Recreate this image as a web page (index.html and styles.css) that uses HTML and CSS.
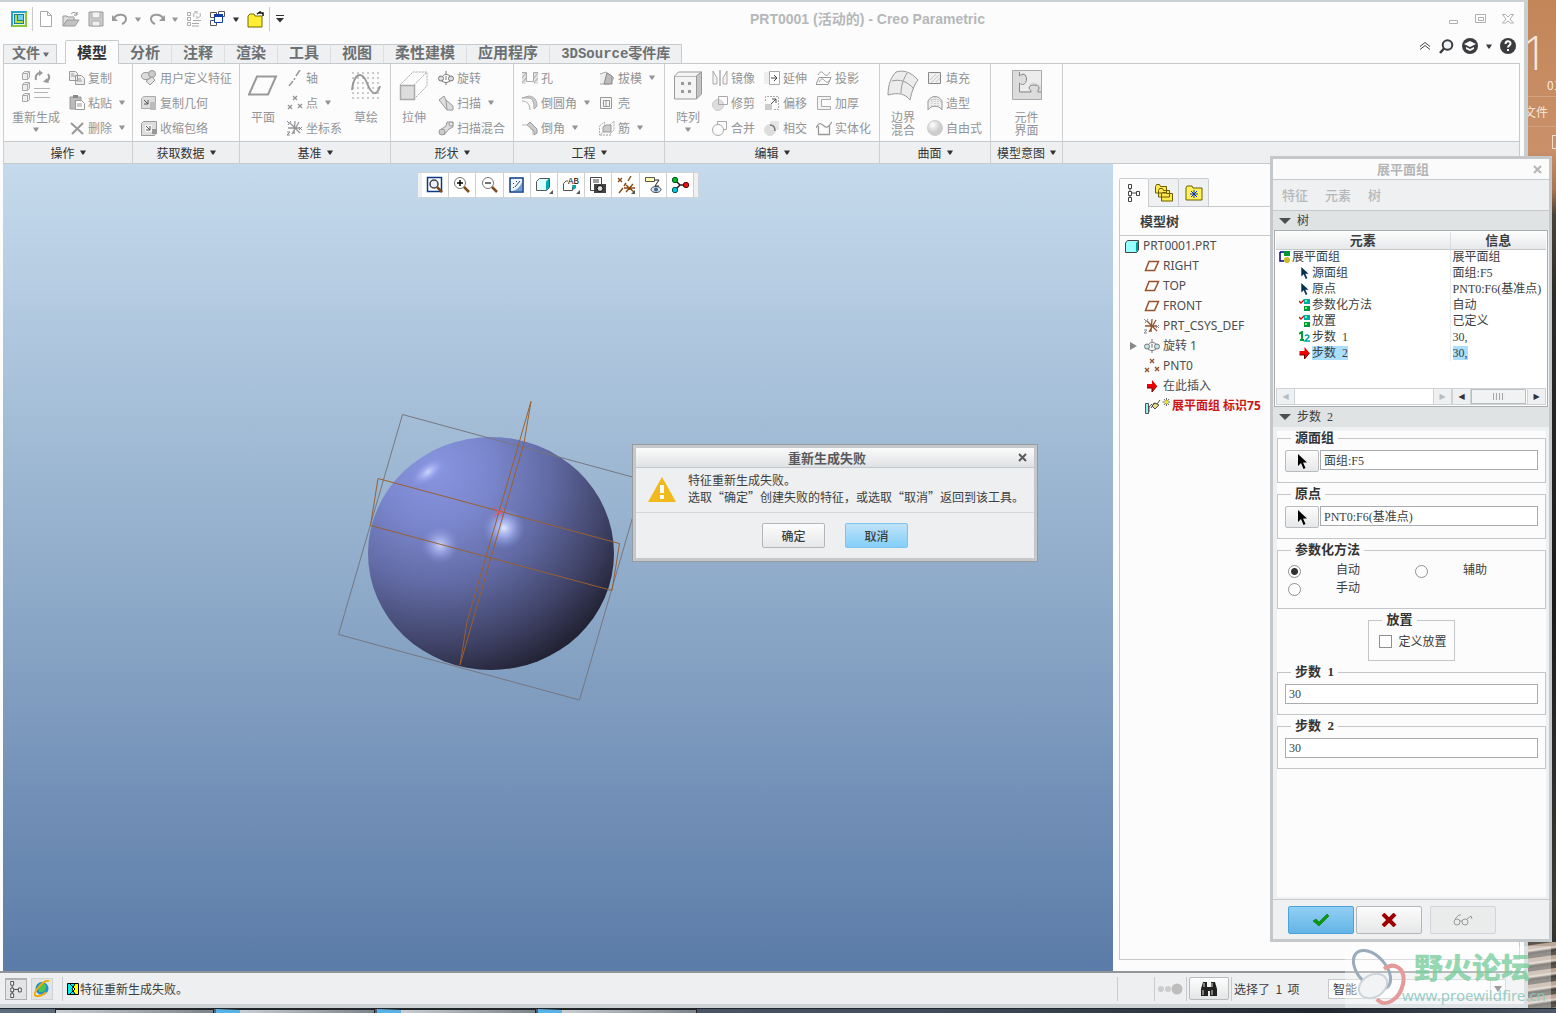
FILE: index.html
```html
<!DOCTYPE html>
<html lang="zh-CN">
  <head>
    <meta charset="UTF-8" />
    <meta name="viewport" content="width=device-width, initial-scale=1.0" />
    <title>PRT0001 (活动的) - Creo Parametric</title>
    <link rel="stylesheet" href="styles.css">
  </head>
  <body>
    <!-- shared icons -->
    <svg class="sprite" aria-hidden="true">
      <symbol id="i-down" viewBox="0 0 6 5"><path d="M0 0.500h6L3.600 4.500h-1.200z" fill="currentColor" /></symbol>
      <symbol id="i-plane" viewBox="0 0 16 12"><path d="M5 1.500h9.500l-4 9h-9z" fill="none" stroke="currentColor" stroke-width="1.500" /></symbol>
      <symbol id="i-points" viewBox="0 0 16 16"><path d="M6 1l4 4m0-4l-4 4M1 10l4 4m0-4l-4 4M11 9l4 4m0-4l-4 4" stroke="currentColor" stroke-width="1.300" fill="none" /></symbol>
      <symbol id="i-csys" viewBox="0 0 16 16"><path d="M3 3l10 10M12 2L5 14M1 8h12M8 1l-1 13" stroke="currentColor" stroke-width="1.300" fill="none" /><path d="M0 1l2 2m2-2L1 5M12 7l3 3m0-3l-3 3M0 12h3l-3 3h3" stroke="#888" fill="none" /></symbol>
      <symbol id="i-revolve" viewBox="0 0 16 14"><path d="M8 0v3m0 2v4m0 2v3M5 5c1-2 5-2 7 0M4 10c3 2 5 2 8 0" stroke="#777" fill="none" /><circle cx="3" cy="7.500" r="2.500" fill="#bfe6e8" stroke="#777" /><circle cx="13" cy="7.500" r="2.500" fill="#bfe6e8" stroke="#777" /></symbol>
      <symbol id="i-cursor" viewBox="0 0 10 15"><path d="M1 0v12l3-3 2.500 6 2-1L6 8.500h4z" fill="currentColor" /></symbol>
      <symbol id="i-tree" viewBox="0 0 14 18"><path d="M3 5v8M5 9h4" stroke="#444" /><path d="M1.500.500h3v4h-3zM1.500 7.500h3v4h-3zM9.500 7.500h3v4h-3zM1.500 13.500h3v4h-3z" fill="#fff" stroke="#444" /></symbol>
      <symbol id="i-arrow" viewBox="0 0 10 12"><path d="M0 4h5V0l5 6-5 6V8H0z" fill="#e00" /><path d="M0 8h5v4l5-6" fill="none" stroke="#700" /></symbol>
      <symbol id="i-def" viewBox="0 0 11 12"><path d="M0 2l2 2 4-4" stroke="#d00" stroke-width="1.300" fill="none" /><path d="M5 0h6v5H5z" fill="#0aa" /><path d="M5 7h6v5H5z" fill="#093" /><path d="M6 1h2v2H6zM6 8h2v2H6z" fill="#6f9" /></symbol>
      <symbol id="i-close" viewBox="0 0 9 9"><path d="M1 1l7 7M8 1L1 8" stroke="currentColor" stroke-width="2" /></symbol>
    </svg>

    <div class="desktop">
      <div class="app">
        <header class="titlebar">
          <div class="quick">
            <svg class="logo" width="16" height="16" viewBox="0 0 16 16"><path d="M0 0h16v16H0z" fill="#8cc63f" /><path d="M0 0h16L0 16z" fill="#2ba5cf" /><path d="M2 2h12v12H2z" fill="#e8f6e6" /><path d="M3 3h10v10H3z" fill="#1b7d9c" /><path d="M7 4h5v5H7z" fill="#6fd0ee" /><path d="M4 4h2v6h6v2H4z" fill="#b9dc3a" /></svg>
            <i class="rule"></i>
            <button class="q" aria-label="新建"><svg width="16" height="16" viewBox="0 0 16 16"><path d="M2.500.500h7l4 4v11h-11zM9.500.500v4h4" fill="#fff" stroke="#aaa" /></svg></button>
            <button class="q" aria-label="打开"><svg width="18" height="16" viewBox="0 0 18 16"><path d="M1 15V5h4l1 1h6v3" fill="#ddd" stroke="#999" /><path d="M1 15l4-6h12l-4 6z" fill="#c2c2c2" stroke="#999" /><path d="M9 3c2-2 4-2 6 0m0-2v3h-3" fill="none" stroke="#888" /></svg></button>
            <button class="q" aria-label="保存"><svg width="16" height="16" viewBox="0 0 16 16"><path d="M1 1h14v14H1z" fill="#ccc" stroke="#999" /><path d="M4 1h8v6H4zM4 10h8v5H4z" fill="#f1f1f1" stroke="#aaa" /></svg></button>
            <button class="q" aria-label="撤消"><svg width="16" height="12" viewBox="0 0 16 12"><path d="M2 5c3-5 12-4 12 1 0 3-2 4-4 5" fill="none" stroke="#999" stroke-width="2" /><path d="M0 2v6h6z" fill="#999" /></svg><svg class="dd" width="6" height="5"><use href="#i-down" /></svg></button>
            <button class="q" aria-label="重做"><svg width="16" height="12" viewBox="0 0 16 12"><path d="M14 5C11 0 2 1 2 6c0 3 2 4 4 5" fill="none" stroke="#999" stroke-width="2" /><path d="M16 2v6h-6z" fill="#999" /></svg><svg class="dd" width="6" height="5"><use href="#i-down" /></svg></button>
            <button class="q" aria-label="重新生成"><svg width="16" height="16" viewBox="0 0 16 16"><path d="M1.500 1.500h3v3h-3zM1.500 6.500h3v3h-3zM1.500 11.500h3v3h-3zM7 9.500h8M6 12.500h7M6 15h7M8 6c-1-3 0-4 2-5M8 0h3v3M14 2c1 3 0 4-2 5M11 8V5" fill="none" stroke="#aaa" /></svg></button>
            <button class="q on" aria-label="窗口"><svg width="16" height="16" viewBox="0 0 16 16"><path d="M.500 1.500h6v5h-6zM8.500.500h6v5h-6zM.500 9.500h6v5h-6z" fill="#fff" stroke="#555" /><path d="M4.500 3.500h8v8h-8z" fill="#fff" stroke="#0a3ea8" /><path d="M4 3h9v3H4z" fill="#0a3ea8" /></svg><svg class="dd" width="6" height="5"><use href="#i-down" /></svg></button>
            <button class="q" aria-label="关闭"><svg width="17" height="17" viewBox="0 0 17 17"><path d="M1 16V5l2-2h4l1 2h7v11z" fill="#ffee33" stroke="#7a6a00" /><path d="M10 3l3-2v1h3v3" fill="none" stroke="#111" stroke-width="1.500" /></svg></button>
            <i class="rule"></i>
            <button class="q on" aria-label="自定义"><svg width="10" height="8" viewBox="0 0 10 8"><path d="M1 .500h8" stroke="#333" /><path d="M1 3h8L5 7.500z" fill="#333" /></svg></button>
          </div>
          <h1 class="title">PRT0001 (活动的) - Creo Parametric</h1>
          <div class="winbtns">
            <button aria-label="最小化"><svg width="12" height="10" viewBox="0 0 12 10"><path d="M1.500 6.500h8v3h-8z" fill="none" stroke="#b0b0b0" /></svg></button>
            <button aria-label="最大化"><svg width="12" height="10" viewBox="0 0 12 10"><path d="M.500.500h10v8h-10zM3.500 3.500h5v3h-5z" fill="none" stroke="#b0b0b0" /></svg></button>
            <button aria-label="关闭窗口"><svg width="12" height="10" viewBox="0 0 12 10"><path d="M.500.500h3L6 3 8.500.500h3L8 5l3.500 4h-3L6 7 3.500 9h-3L4 5z" fill="none" stroke="#b0b0b0" /></svg></button>
          </div>
        </header>

        <nav class="tabs">
          <button class="tab file">文件<svg width="6" height="5"><use href="#i-down" /></svg></button>
          <button class="tab active">模型</button>
          <button class="tab">分析</button>
          <button class="tab">注释</button>
          <button class="tab">渲染</button>
          <button class="tab">工具</button>
          <button class="tab">视图</button>
          <button class="tab">柔性建模</button>
          <button class="tab">应用程序</button>
          <button class="tab last">3DSource零件库</button>
          <div class="helpers">
            <button aria-label="折叠"><svg width="12" height="8" viewBox="0 0 12 8"><path d="M1 4.500L6 .500l5 4M1 7.500l5-4 5 4" fill="none" stroke="#444" /></svg></button>
            <button aria-label="搜索"><svg width="15" height="15" viewBox="0 0 15 15"><circle cx="8.500" cy="6" r="4.800" fill="#eef4f8" stroke="#3c3c40" stroke-width="2" /><path d="M5 9.500L1 14" stroke="#3c3c40" stroke-width="2.500" /></svg></button>
            <button aria-label="学习"><svg width="16" height="16" viewBox="0 0 16 16"><circle cx="8" cy="8" r="8" fill="#3c3c40" /><path d="M2 6l6-3 6 3-6 3zM4 9v2l4 2 4-2V9l-4 2z" fill="#fff" /></svg></button>
            <button aria-label="更多"><svg width="6" height="5"><use href="#i-down" /></svg></button>
            <button aria-label="帮助"><svg width="16" height="16" viewBox="0 0 16 16"><circle cx="8" cy="8" r="8" fill="#3c3c40" /><path d="M5.500 6c0-3.500 5-3.500 5-.500C10.500 7.500 8 7.500 8 9.500M8 11v2" fill="none" stroke="#fff" stroke-width="2" /></svg></button>
          </div>
        </nav>

        <section class="ribbon">
          <div class="group">
            <div class="tools">
              <button class="big wide"><svg width="30" height="32" viewBox="0 0 30 32"><path d="M1.500 3.500l2-2h5v6l-2 2h-5zM1.500 14.500l2-2h5v6l-2 2h-5zM1.500 25.500l2-2h5v6l-2 2h-5z" fill="#eee" stroke="#aaa" /><path d="M1.500 3.500h5v6M6.500 3.500l2-2M1.500 14.500h5v6M6.500 14.500l2-2M1.500 25.500h5v6M6.500 25.500l2-2" fill="none" stroke="#aaa" /><path d="M13 18.500h16M13 22.500h14M13 27.500h16" stroke="#b4b4b4" /><path d="M15 10c-1-4 1-7 4-7M27 4c2 3 1 6-2 8" stroke="#999" stroke-width="2" fill="none" /><path d="M18 0l4 3-4 3zM28 13l-6-1 4-4z" fill="#999" /></svg><span>重新生成</span><svg class="dd" width="6" height="5"><use href="#i-down" /></svg></button>
              <div class="col">
                <button><svg width="16" height="16" viewBox="0 0 16 16"><path d="M.500 1.500h6l2 2v7h-8zM6.500 5.500h6l3 3v6h-9zM2 4h3M2 6h4M8 9h4M8 11h5" fill="#eee" stroke="#999" /></svg>复制</button>
                <button><svg width="16" height="16" viewBox="0 0 16 16"><path d="M1 2h11v12H1z" fill="#bbb" stroke="#999" /><path d="M4 0h5v3H4z" fill="#888" /><path d="M6.500 5.500h6l3 3v6h-9zM8 9h5M8 11h5" fill="#fff" stroke="#999" /></svg>粘贴<svg class="dd" width="6" height="5"><use href="#i-down" /></svg></button>
                <button><svg width="16" height="16" viewBox="0 0 16 16"><path d="M2 3l12 11M14 3L3 14" stroke="#999" stroke-width="2" /></svg>删除<svg class="dd" width="6" height="5"><use href="#i-down" /></svg></button>
              </div>
            </div>
            <button class="name">操作 <svg width="6" height="5"><use href="#i-down" /></svg></button>
          </div>

          <div class="group">
            <div class="tools">
              <div class="col">
                <button><svg width="16" height="16" viewBox="0 0 16 16"><ellipse cx="5" cy="6" rx="4.500" ry="3.500" fill="#ddd" stroke="#999" /><circle cx="11" cy="4" r="3.500" fill="#ccc" stroke="#999" /><path d="M5 11l6-4 3 3-5 5z" fill="#e4e4e4" stroke="#999" /></svg>用户定义特征</button>
                <button><svg width="16" height="16" viewBox="0 0 16 16"><path d="M.500 3.500l2-2h12v9l-4 3H.500z" fill="#ddd" stroke="#aaa" /><path d="M3 5l4 4M7 5v4H3" stroke="#555" fill="none" /><path d="M9 7h6v8H9z" fill="#bbb" /></svg>复制几何</button>
                <button><svg width="16" height="16" viewBox="0 0 16 16"><path d="M.500 3.500l2-2h13v11l-2 3H.500z" fill="#ddd" stroke="#999" /><path d="M4 5h7v7H4z" fill="#f6f6f6" /><path d="M5 6l4 4M9 6v4H5" stroke="#555" fill="none" /><path d="M11 9h5v5h-5z" fill="#999" /></svg>收缩包络</button>
              </div>
            </div>
            <button class="name">获取数据 <svg width="6" height="5"><use href="#i-down" /></svg></button>
          </div>

          <div class="group">
            <div class="tools">
              <button class="big"><svg width="30" height="32" viewBox="0 0 30 32"><path d="M9 6.500h19l-8 18H1z" fill="none" stroke="#999" stroke-width="2" /></svg><span>平面</span></button>
              <div class="col">
                <button><svg width="16" height="16" viewBox="0 0 16 16"><path d="M13 0L9 6M8 8l-1 2M6 11l-4 5" stroke="#999" stroke-width="1.500" /></svg>轴</button>
                <button><svg width="16" height="16"><use href="#i-points" /></svg>点<svg class="dd" width="6" height="5"><use href="#i-down" /></svg></button>
                <button><svg width="16" height="16"><use href="#i-csys" /></svg>坐标系</button>
              </div>
              <button class="big"><svg width="30" height="32" viewBox="0 0 30 32"><path d="M1 3h28M1 8h28M1 13h28M1 18h28M1 23h28M1 28h28" stroke="#bbb" stroke-dasharray="2 3" stroke-width="1.500" /><path d="M1 20C3 3 11 0 16 13s10 13 13 3" fill="none" stroke="#999" stroke-width="2" /></svg><span>草绘</span></button>
            </div>
            <button class="name">基准 <svg width="6" height="5"><use href="#i-down" /></svg></button>
          </div>

          <div class="group">
            <div class="tools">
              <button class="big"><svg width="30" height="32" viewBox="0 0 30 32"><path d="M1.500 15.500h14v14h-14z" fill="#ddd" stroke="#aaa" stroke-width="1.500" /><path d="M1 15L14 2h14v14L15 29M15 15L28 2" fill="none" stroke="#aaa" stroke-dasharray="2 1" /></svg><span>拉伸</span></button>
              <div class="col">
                <button><svg class="grey" width="16" height="16"><use href="#i-revolve" /></svg>旋转</button>
                <button><svg width="16" height="16" viewBox="0 0 16 16"><path d="M1 5l5-4 2 4 7 6v4H9L5 10z" fill="#ddd" stroke="#999" /><path d="M8 5l1 10" stroke="#999" /></svg>扫描<svg class="dd" width="6" height="5"><use href="#i-down" /></svg></button>
                <button><svg width="16" height="16" viewBox="0 0 16 16"><path d="M2 10l6-4 1-4h6v5l-4 2-5 6z" fill="#ddd" stroke="#999" /><circle cx="4" cy="12" r="3" fill="#ccc" stroke="#999" /><circle cx="13" cy="4" r="2" fill="#eee" stroke="#999" /></svg>扫描混合</button>
              </div>
            </div>
            <button class="name">形状 <svg width="6" height="5"><use href="#i-down" /></svg></button>
          </div>

          <div class="group">
            <div class="tools">
              <div class="col">
                <button><svg width="16" height="16" viewBox="0 0 16 16"><path d="M0 2h4v12H0zM12 2h4v12h-4z" fill="#e0e0e0" /><path d="M0 2.500h4.500v9h7v-9H16M0 8l4-5M0 13l4-5M12 13l4-5M12 8l4-5" fill="none" stroke="#aaa" /></svg>孔</button>
                <button><svg width="16" height="16" viewBox="0 0 16 16"><path d="M0 3h6c5 0 6 4 6 11l3-3c0-7-3-9-8-10z" fill="#ccc" stroke="#aaa" /><path d="M0 6c5 0 8 3 8 9" stroke="#aaa" fill="none" /></svg>倒圆角<svg class="dd" width="6" height="5"><use href="#i-down" /></svg></button>
                <button><svg width="16" height="16" viewBox="0 0 16 16"><path d="M5 5l3-3 7 7v4l-3 2v-4z" fill="#ccc" stroke="#999" /><path d="M0 5h5l6 6v4" stroke="#bbb" fill="none" /></svg>倒角<svg class="dd" width="6" height="5"><use href="#i-down" /></svg></button>
              </div>
              <div class="col">
                <button><svg width="16" height="16" viewBox="0 0 16 16"><path d="M1 4l6-2 8 6-5 6H1" fill="#eee" stroke="#aaa" /><path d="M5 14L8 3l5 3v8z" fill="#bbb" stroke="#888" /></svg>拔模<svg class="dd" width="6" height="5"><use href="#i-down" /></svg></button>
                <button><svg width="16" height="16" viewBox="0 0 16 16"><path d="M1.500 2.500h11v11h-11zM4.500 5.500h6v6h-6z" fill="#f4f4f4" stroke="#999" /><path d="M7 6v5" stroke="#999" /></svg>壳</button>
                <button><svg width="16" height="16" viewBox="0 0 16 16"><path d="M.500 6l5-4v9l-5 4zM11 5l4-4v9l-4 4" fill="none" stroke="#aaa" stroke-dasharray="2 1" /><path d="M4 12V7l3-2h5v7z" fill="#ccc" stroke="#999" /><path d="M1 15h11" stroke="#999" stroke-dasharray="2 1" /></svg>筋<svg class="dd" width="6" height="5"><use href="#i-down" /></svg></button>
              </div>
            </div>
            <button class="name">工程 <svg width="6" height="5"><use href="#i-down" /></svg></button>
          </div>

          <div class="group">
            <div class="tools">
              <button class="big"><svg width="30" height="32" viewBox="0 0 30 32"><path d="M1.500 6l4-4h23l-5 4v23h-22z" fill="#f4f4f4" stroke="#999" /><path d="M1.500 6.500h22" stroke="#bbb" /><path d="M23.500 6l5-4v22l-5 5z" fill="#c4c4c4" stroke="#999" /><path d="M8 12h3v3H8zM15 12h3v3h-3zM8 20h3v3H8zM15 20h3v3h-3z" fill="#999" /></svg><span>阵列</span><svg class="dd" width="6" height="5"><use href="#i-down" /></svg></button>
              <div class="col">
                <button><svg width="16" height="16" viewBox="0 0 16 16"><path d="M1 1v13h4V8zM15 1v13h-4V8z" fill="#f4f4f4" stroke="#aaa" /><path d="M8 0v16" stroke="#888" /></svg>镜像</button>
                <button><svg width="16" height="16" viewBox="0 0 16 16"><circle cx="6" cy="10" r="5.500" fill="#ddd" stroke="#ccc" /><path d="M6.500 9.500v-8h9v8z" fill="none" stroke="#aaa" /></svg>修剪</button>
                <button><svg width="16" height="16" viewBox="0 0 16 16"><circle cx="6" cy="10" r="5.500" fill="none" stroke="#aaa" /><path d="M5.500 5V1.500h9v8H11" fill="none" stroke="#aaa" /></svg>合并</button>
              </div>
              <div class="col">
                <button><svg width="16" height="16" viewBox="0 0 16 16"><path d="M0 2h5v12H0z" fill="#eee" /><path d="M5.500 1.500h10v13h-10z" fill="#fff" stroke="#aaa" /><path d="M7 8h6m-3-3l3 3-3 3" stroke="#444" fill="none" /></svg>延伸</button>
                <button><svg width="16" height="16" viewBox="0 0 16 16"><path d="M1 9h7v6H1z" fill="#ccc" /><path d="M1.500 6V1.500h13v13H10" fill="none" stroke="#aaa" stroke-dasharray="2 1" /><path d="M7 9l5-5m-4 0h4v4" stroke="#555" fill="none" /></svg>偏移</button>
                <button><svg width="16" height="16" viewBox="0 0 16 16"><circle cx="6" cy="10" r="5.500" fill="#ddd" stroke="#ddd" /><path d="M6 1h9v9H6z" fill="#e6e6e6" /><path d="M6 5c4 0 5 2 5 6" stroke="#777" stroke-width="1.500" fill="none" /></svg>相交</button>
              </div>
              <div class="col">
                <button><svg width="16" height="16" viewBox="0 0 16 16"><path d="M2 5c3-5 4-3 6-1s4 2 6-2M3 12c3-5 4-3 6-1s3 1 5-1M3 7.500h12l-3 7H0z" fill="none" stroke="#999" /></svg>投影</button>
                <button><svg width="16" height="16" viewBox="0 0 16 16"><path d="M14.500 4.500h-9v7h9v3h-13v-13h13z" fill="#f4f4f4" stroke="#aaa" /></svg>加厚</button>
                <button><svg width="16" height="16" viewBox="0 0 16 16"><path d="M0 8c3-6 5-5 8-2s5 0 8-4M2.500 6v8.500h11V5" fill="none" stroke="#999" stroke-width="1.300" /></svg>实体化</button>
              </div>
            </div>
            <button class="name">编辑 <svg width="6" height="5"><use href="#i-down" /></svg></button>
          </div>

          <div class="group">
            <div class="tools">
              <button class="big"><svg width="32" height="32" viewBox="0 0 32 32"><path d="M9 2c7-2 14-1 22 8-4 5-6 11-8 20C18 24 12 22 1 25 1 15 4 7 9 2z" fill="#ececec" stroke="#999" /><path d="M5 11c8-2 15 0 22 8M20 3c-4 7-6 13-6 20" fill="none" stroke="#999" /></svg><span>边界<br />混合</span></button>
              <div class="col">
                <button><svg width="16" height="16" viewBox="0 0 16 16"><path d="M1.500 2.500h12v11h-12z" fill="#eee" stroke="#888" /><path d="M3 10l6-6M4 13l8-8M9 12l4-4" stroke="#ccc" /></svg>填充</button>
                <button><svg width="16" height="16" viewBox="0 0 16 16"><path d="M1 15V6c3-6 11-6 14 0v9c-3-5-11-5-14 0z" fill="#eee" stroke="#999" /><path d="M5 11V3M8 11V2M11 11V3M1 8c4-5 10-5 14 0" stroke="#bbb" stroke-dasharray="1 1" fill="none" /></svg>造型</button>
                <button><svg width="16" height="16" viewBox="0 0 16 16"><defs><radialGradient id="ball" cx=".35" cy=".3"><stop offset="0" stop-color="#fff" /><stop offset="1" stop-color="#ccc" /></radialGradient></defs><circle cx="8" cy="8" r="7.500" fill="url(#ball)" stroke="#ccc" /></svg>自由式</button>
              </div>
            </div>
            <button class="name">曲面 <svg width="6" height="5"><use href="#i-down" /></svg></button>
          </div>

          <div class="group">
            <div class="tools center">
              <button class="big"><svg width="30" height="32" viewBox="0 0 30 32"><path d="M.500.500h29v29H.500z" fill="#dcdcdc" stroke="#aaa" /><path d="M1 1h28v14l-3-1c-4-3-10-1-9 3l2 4H8v-9c7 4 10-8 3-9L8 5V1z" fill="#ececec" /><path d="M7.500 2v4c3-3 7-2 7 3s-4 7-7 4v9H19c1-1-2-3-2-4 0-4 10-4 10 0 0 1-2 3-1 4h3" fill="none" stroke="#888" /></svg><span>元件<br />界面</span></button>
            </div>
            <button class="name">模型意图 <svg width="6" height="5"><use href="#i-down" /></svg></button>
          </div>
          <div class="group rest"><div class="tools"></div><div class="name"></div></div>
        </section>

        <main class="work">
          <div class="canvas">
            <div class="viewbar">
              <button aria-label="重新调整"><svg width="18" height="18" viewBox="0 0 18 18"><path d="M1.500 1.500h14v14h-14z" fill="#fff" stroke="#0a3a86" stroke-width="1.500" /><circle cx="8" cy="8" r="4" fill="#eef" stroke="#444" stroke-width="1.500" /><path d="M11 11l5 5" stroke="#7b4a1e" stroke-width="2.500" /></svg></button>
              <button aria-label="放大"><svg width="18" height="18" viewBox="0 0 18 18"><circle cx="7" cy="7" r="5.500" fill="#fff" stroke="#777" /><path d="M4 7h6M7 4v6" stroke="#000" stroke-width="1.500" /><path d="M11 11l5 5" stroke="#7b4a1e" stroke-width="2.500" /></svg></button>
              <button aria-label="缩小"><svg width="18" height="18" viewBox="0 0 18 18"><circle cx="7" cy="7" r="5.500" fill="#fff" stroke="#777" /><path d="M4 7h6" stroke="#444" stroke-width="1.500" /><path d="M11 11l5 5" stroke="#7b4a1e" stroke-width="2.500" /></svg></button>
              <button aria-label="重画"><svg width="18" height="18" viewBox="0 0 18 18"><path d="M2 2h13v14H2z" fill="#eef6fd" stroke="#0a3a86" stroke-width="1.500" /><path d="M14 6v9H4c5-1 8-4 10-9z" fill="#6f9ccf" /><path d="M12 5l-5 6M5 7l1 1M8 5l1 1M5 11l1 1" stroke="#345" /></svg></button>
              <button aria-label="显示样式"><svg width="18" height="18" viewBox="0 0 18 18"><path d="M1.500 5.500l3-3h10v9l-3 3h-10z" fill="#dff" stroke="#555" /><path d="M11 5.500l3-3v9l-3 3z" fill="#0aa" /><path d="M18 14v4h-4z" fill="#555" /></svg></button>
              <button aria-label="已命名视图"><svg width="18" height="18" viewBox="0 0 18 18"><path d="M6 5H4L1.500 7.500v7h9V11" fill="#fff" stroke="#555" /><path d="M10 9h4v3l-3 2z" fill="#0aa" /><text x="6" y="8" class="ab">AB</text><path d="M18 14v4h-4z" fill="#555" /></svg></button>
              <button aria-label="视图管理器"><svg width="18" height="18" viewBox="0 0 18 18"><path d="M1.500 1.500h11v13h-11zM4 4h6M4 6h6" fill="#fff" stroke="#444" /><path d="M5 8h12v9H5z" fill="#444" /><circle cx="11" cy="12.500" r="3" fill="#ddd" stroke="#000" /></svg></button>
              <button aria-label="基准显示"><svg width="18" height="18" viewBox="0 0 18 18"><path d="M1 2l4 4m0-4L1 6M14 0l-3 5M9 7l-2 3M6 12l-4 5M9 9l8 7m-1-8l-7 8M7 12h11" stroke="#8a4a18" stroke-width="1.400" fill="none" /><path d="M18 14v4h-4z" fill="#555" /></svg></button>
              <button aria-label="注释显示"><svg width="18" height="18" viewBox="0 0 18 18"><path d="M1.500 1.500h9v4h-9z" fill="#ffffb0" stroke="#555" /><path d="M11 4h4l-4 6h4" fill="none" stroke="#222" /><ellipse cx="12" cy="13.500" rx="5" ry="3" fill="#dbe6ee" stroke="#444" /><circle cx="12" cy="13.500" r="2" fill="#369" /></svg></button>
              <button aria-label="旋转中心"><svg width="18" height="18" viewBox="0 0 18 18"><path d="M4 4l5 5h5M9 9l-5 5" fill="none" stroke="#222" stroke-width="1.500" /><circle cx="4" cy="4" r="2.700" fill="#0b2" stroke="#052" /><circle cx="15" cy="9" r="2.700" fill="#e11" stroke="#500" /><circle cx="4" cy="14" r="2.700" fill="#0cd" stroke="#055" /></svg></button>
            </div>

            <svg class="model" width="320" height="320" viewBox="0 0 320 320" role="img" aria-label="球面模型">
              <defs>
                <radialGradient id="ballShade" gradientUnits="userSpaceOnUse" cx="105" cy="80" r="228">
                  <stop offset="0" stop-color="#8895e0" />
                  <stop offset=".25" stop-color="#7a86cc" />
                  <stop offset=".5" stop-color="#626ba5" />
                  <stop offset=".75" stop-color="#42466c" />
                  <stop offset="1" stop-color="#1b1a27" />
                </radialGradient>
                <radialGradient id="glint">
                  <stop offset="0" stop-color="#dfe8ff" />
                  <stop offset=".4" stop-color="#b4c0fb" stop-opacity=".7" />
                  <stop offset="1" stop-color="#8a96e0" stop-opacity="0" />
                </radialGradient>
              </defs>
              <ellipse cx="161" cy="163.500" rx="123" ry="116.500" fill="url(#ballShade)" />
              <ellipse cx="98" cy="82" rx="20" ry="10" fill="url(#glint)" opacity=".8" transform="rotate(-38 98 82)" />
              <circle cx="110" cy="155" r="19" fill="url(#glint)" opacity=".8" />
              <circle cx="174" cy="138" r="21" fill="url(#glint)" />
              <g fill="none" stroke-width="1">
                <path d="M72.500 24.500L8.500 244.500l241 65.500 64-220z" stroke="#76777f" />
                <path d="M48 88.500l241.500 65-7.500 47-241.500-65zM201 11.500L194 53 130 275l7-43z" stroke="#99602f" />
                <path d="M165 122h9M164 117l10 10m0-10l-10 10" stroke="#e0556a" />
              </g>
            </svg>

            <div class="alert" role="alertdialog" aria-labelledby="alertTitle">
              <div class="alert-title"><h2 id="alertTitle">重新生成失败</h2><button aria-label="关闭"><svg width="9" height="9"><use href="#i-close" /></svg></button></div>
              <div class="alert-body">
                <svg width="28" height="25" viewBox="0 0 28 25"><path d="M14 0l14 25H0z" fill="#f2b91c" /><path d="M14 8v8M14 18v4" stroke="#fff" stroke-width="4" /></svg>
                <p>特征重新生成失败。<br />选取“确定”创建失败的特征，或选取“取消”返回到该工具。</p>
              </div>
              <div class="alert-actions"><button>确定</button><button class="primary">取消</button></div>
            </div>
          </div>

          <aside class="navigator">
            <div class="nav-tabs">
              <button class="active" aria-label="模型树"><svg width="14" height="18"><use href="#i-tree" /></svg></button>
              <button aria-label="文件夹浏览器"><svg width="18" height="18" viewBox="0 0 18 18"><path d="M.500 9V2.500l1-2h3l1 2h6V9zM3.500 13V6.500l1-2h3l1 2h6V13zM6.500 17v-7.500l1-1h3l1 1h6V17z" fill="#ffe94a" stroke="#6b5c00" /></svg></button>
              <button aria-label="收藏夹"><svg width="18" height="16" viewBox="0 0 18 16"><path d="M1 15V3l1-2h5l1 2h9v12z" fill="#fff25a" stroke="#6b5c00" /><path d="M9 5v8M5 9h8M6 6l6 6m0-6l-6 6" stroke="#0a2ec8" /></svg></button>
            </div>
            <div class="nav-panel">
              <h3>模型树</h3>
              <ul class="tree">
                <li class="root"><svg width="14" height="13" viewBox="0 0 14 13"><path d="M.500 3l2-2.500h11V10l-2 2.500H.500z" fill="#9ff" stroke="#444" /><path d="M11 3l2-2v9l-2 2z" fill="#099" /></svg>PRT0001.PRT</li>
                <li><svg class="brown" width="16" height="12"><use href="#i-plane" /></svg>RIGHT</li>
                <li><svg class="brown" width="16" height="12"><use href="#i-plane" /></svg>TOP</li>
                <li><svg class="brown" width="16" height="12"><use href="#i-plane" /></svg>FRONT</li>
                <li><svg class="brown" width="16" height="16"><use href="#i-csys" /></svg>PRT_CSYS_DEF</li>
                <li class="closed"><svg width="16" height="14"><use href="#i-revolve" /></svg>旋转 1</li>
                <li><svg class="brown" width="16" height="16"><use href="#i-points" /></svg>PNT0</li>
                <li><svg width="16" height="12"><use href="#i-arrow" /></svg>在此插入</li>
                <li class="failed"><svg width="26" height="16" viewBox="0 0 26 16"><path d="M1.500 5.500h3v10h-3z" fill="#9ee" stroke="#555" /><path d="M5 14V9l3-3" stroke="#555" fill="none" /><path d="M7 10l3-5 3 1 3-4" stroke="#553" fill="none" /><path d="M8 8l3-3 4 2-4 4z" fill="#e7d795" stroke="#553" /><path d="M22.500 0v8M18.500 4h8M20 1l5 6m0-6l-5 6" stroke="#444" stroke-width=".8" /><circle cx="22.500" cy="4" r="1.800" fill="#fe0" /></svg>展平面组 标识75</li>
              </ul>
            </div>
          </aside>
        </main>

        <footer class="status">
          <button class="s-btn" aria-label="导航器"><svg width="14" height="17" viewBox="0 0 14 18"><use href="#i-tree" /></svg></button>
          <button class="s-btn flat" aria-label="浏览器"><svg width="16" height="17" viewBox="0 0 16 17"><circle cx="8" cy="8.500" r="6.500" fill="#1b8fd8" /><path d="M4 7c2-5 7-5 8-1s-3 7-7 6z" fill="#4fc24f" /><path d="M1 16C-1 11 11-1 15 1M12 12c-3 4-7 4-11 4" stroke="#f2a900" stroke-width="2" fill="none" /></svg></button>
          <i class="rule"></i>
          <svg width="12" height="12" viewBox="0 0 12 12"><path d="M.500.500h11v11H.500z" fill="#0ee" stroke="#000" /><path d="M8 1h3v10H8L5 6z" fill="#ff0" /><path d="M3 1l5 5-5 5M8 1L5 6l3 5" stroke="#000" fill="none" /></svg>
          <span>特征重新生成失败。</span>
          <div class="status-right">
            <i class="rule"></i><i class="rule far"></i>
            <svg width="27" height="12" viewBox="0 0 27 12"><circle cx="4" cy="6" r="3" fill="#ccc" /><circle cx="11" cy="6" r="3" fill="#ccc" /><circle cx="20" cy="6" r="5.500" fill="#bdbdbd" /></svg>
            <i class="rule"></i>
            <button class="find" aria-label="查找"><svg width="16" height="16" viewBox="0 0 16 16"><path d="M2 1h4v5l1 1v8H0V8zM10 1h4l2 7v7H9V7l1-1z" fill="#222" /><path d="M6 6h4v4H6z" fill="#222" /><path d="M2 9v5M11 9v5M3 2v4M11 2v4" stroke="#ddc" /></svg></button>
            <i class="rule"></i>
            <span class="count">选择了&nbsp; 1&nbsp; 项</span>
            <select aria-label="选择过滤器"><option>智能</option></select>
          </div>
        </footer>
      </div>

      <div class="wallpaper">
        <div class="gadget"><b>1</b><span>01</span></div>
        <div class="gadget-file">文件</div>
        <div class="gadget-row"></div>
        <div class="straw"></div>
      </div>

      <div class="taskbar"><i></i><i class="blue"></i><i class="blue"></i><i class="blue"></i></div>

      <section class="dialog">
        <header><h2>展平面组</h2><button aria-label="关闭"><svg width="9" height="9"><use href="#i-close" /></svg></button></header>
        <nav><button>特征</button><button>元素</button><button>树</button></nav>
        <h3 class="bar">树</h3>
        <div class="grid-box">
          <table>
            <thead><tr><th>元素</th><th>信息</th></tr></thead>
            <tbody>
              <tr class="top"><td><svg width="11" height="12" viewBox="0 0 11 12"><path d="M1 1h4M1 1v9h4" stroke="#009" stroke-width="1.500" fill="none" /><path d="M5 0h6v5H5z" fill="#093" /><circle cx="8" cy="9" r="3" fill="#cb2" /></svg>展平面组</td><td>展平面组</td></tr>
              <tr><td><svg class="navy" width="11" height="12"><use href="#i-cursor" /></svg>源面组</td><td>面组:F5</td></tr>
              <tr><td><svg class="navy" width="11" height="12"><use href="#i-cursor" /></svg>原点</td><td>PNT0:F6(基准点)</td></tr>
              <tr><td><svg width="11" height="12"><use href="#i-def" /></svg>参数化方法</td><td>自动</td></tr>
              <tr><td><svg width="11" height="12"><use href="#i-def" /></svg>放置</td><td>已定义</td></tr>
              <tr><td><svg width="11" height="12" viewBox="0 0 11 12"><path d="M0 3l3-2v8M1 9h4" stroke="#093" stroke-width="2" fill="none" /><path d="M6 5c1-2 4-1 4 1L6 10h5" stroke="#0aa" stroke-width="1.500" fill="none" /></svg>步数&nbsp; 1</td><td>30,</td></tr>
              <tr class="sel"><td><svg width="11" height="12"><use href="#i-arrow" /></svg><mark>步数&nbsp; 2</mark></td><td><mark>30,</mark></td></tr>
            </tbody>
          </table>
          <div class="scrolls">
            <div class="scroll off"><button aria-label="左">◀</button><span></span><button aria-label="右">▶</button></div>
            <div class="scroll"><button aria-label="左">◀</button><span><i></i></span><button aria-label="右">▶</button></div>
          </div>
        </div>
        <h3 class="bar">步数&nbsp; 2</h3>
        <form class="fields">
          <fieldset>
            <legend>源面组</legend>
            <div class="pick"><button type="button" aria-label="选择源面组"><svg width="10" height="15"><use href="#i-cursor" /></svg></button><input type="text" aria-label="源面组" value="面组:F5" /></div>
          </fieldset>
          <fieldset>
            <legend>原点</legend>
            <div class="pick"><button type="button" aria-label="选择原点"><svg width="10" height="15"><use href="#i-cursor" /></svg></button><input type="text" aria-label="原点" value="PNT0:F6(基准点)" /></div>
          </fieldset>
          <fieldset>
            <legend>参数化方法</legend>
            <div class="radios">
              <label><input type="radio" name="method" checked /><span>自动</span></label>
              <label><input type="radio" name="method" /><span>辅助</span></label>
              <label><input type="radio" name="method" /><span>手动</span></label>
            </div>
          </fieldset>
          <fieldset class="small">
            <legend>放置</legend>
            <label class="check"><input type="checkbox" />定义放置</label>
          </fieldset>
          <fieldset>
            <legend>步数&nbsp; 1</legend>
            <input type="text" aria-label="步数 1" value="30" />
          </fieldset>
          <fieldset>
            <legend>步数&nbsp; 2</legend>
            <input type="text" aria-label="步数 2" value="30" />
          </fieldset>
        </form>
        <div class="dialog-actions">
          <button class="ok" aria-label="确定"><svg width="18" height="14" viewBox="0 0 18 14"><path d="M1 8l3-2 3 3 8-8 2 2L7 13z" fill="#0a9b0a" stroke="#056505" stroke-width=".5" /></svg></button>
          <button aria-label="取消"><svg width="16" height="14" viewBox="0 0 16 14"><path d="M2 1l12 12M14 1L2 13" stroke="#9c0000" stroke-width="4" /></svg></button>
          <button class="preview" disabled aria-label="预览"><svg width="20" height="12" viewBox="0 0 20 12"><circle cx="4" cy="8" r="3" fill="none" stroke="#999" /><circle cx="12" cy="8" r="3" fill="none" stroke="#999" /><path d="M7 7h2M2 5l4-4h2M14 5l4-3 1 3" fill="none" stroke="#999" /></svg></button>
        </div>
      </section>

      <div class="watermark">
        <svg width="60" height="58" viewBox="0 0 60 58" fill="none"><ellipse cx="25" cy="21" rx="23" ry="14" transform="rotate(48 25 21)" stroke="#9aabbb" stroke-width="3" /><ellipse cx="26" cy="37" rx="15" ry="11" transform="rotate(-30 26 37)" fill="#f1f3f4" stroke="#cdd4da" stroke-width="2" /><path d="M37 20c11-8 22 0 19 15S38 60 30 50" stroke="#e59a9a" stroke-width="4" /></svg>
        <div><strong>野火论坛</strong><span>www.proewildfire.cn</span></div>
      </div>
    </div>
  </body>
</html>
```
FILE: styles.css
```css
* {
  box-sizing: border-box;
}
body {
  margin: 0;
  font: 12px/14px "Noto Sans CJK SC", sans-serif;
  color: #3c3e41;
}
button,
input,
select {
  font: inherit;
  color: inherit;
}
button {
  padding: 0;
  border: 0;
  background: none;
}
svg {
  display: block;
  flex: none;
}
h1,
h2,
h3,
p,
ul {
  margin: 0;
  padding: 0;
}
.sprite {
  position: absolute;
  width: 0;
  height: 0;
}

/* desktop */
.desktop {
  position: relative;
  display: grid;
  grid-template-columns: 1fr 28px;
  grid-template-rows: 1fr 5px;
  min-height: 100vh;
  overflow: hidden;
}
.wallpaper {
  display: flex;
  flex-direction: column;
  overflow: hidden;
  color: #f7e9dc;
  background: linear-gradient(#c38659 0, #c9906a 150px, #a97552 190px, #4a4238 215px, #2a2a28 300px, #191a1b 600px, #3a3a36 900px, #242826 100%);
}
.gadget {
  height: 97px;
  padding-top: 28px;
  border-bottom: 1px solid #d4a27f;
}
.gadget b {
  display: block;
  margin-left: -7px;
  font: 300 48px/48px "Open Sans", sans-serif;
}
.gadget span {
  display: block;
  margin-left: 19px;
  line-height: 18px;
}
.gadget-file {
  height: 30px;
  line-height: 30px;
  margin-left: -4px;
  border-bottom: 1px solid #d4a27f;
}
.gadget-row {
  width: 14px;
  height: 14px;
  margin: 8px 0 0 24px;
  border: 1px solid #f0ddcc;
}
.straw {
  height: 66px;
  margin-top: auto;
  background: repeating-linear-gradient(172deg, #5a534c 0 3px, #b9a697 4px 7px, #d6c8bc 8px 9px, #4b463f 11px 13px);
}
.taskbar {
  grid-column: 1 / -1;
  display: flex;
  gap: 2px;
  padding-left: 55px;
  border-top: 1px solid #20262e;
  background: linear-gradient(90deg, #5d6c7d, #414c5c 60%, #20262e 85%, #4c5868);
}
.taskbar i {
  width: 159px;
  border: 1px solid #222;
  border-bottom: 0;
  background: linear-gradient(90deg, #c9ced3, #7b838c);
}
.taskbar .blue {
  border-left: 24px solid #58b2e4;
}

/* application window */
.app {
  display: flex;
  flex-direction: column;
  min-width: 0;
  border-top: 2px solid #cbd0d4;
  border-right: 4px solid #c8cfd3;
  background: #fcfcfc;
}
.titlebar {
  display: grid;
  grid-template-columns: 1fr auto 1fr;
  align-items: center;
  height: 34px;
  padding: 0 10px;
}
.quick {
  display: flex;
  align-items: center;
  gap: 8px;
}
.quick .rule {
  height: 24px;
  margin: 0 -3px;
}
.logo {
  margin-left: 1px;
}
.rule {
  width: 1px;
  height: 24px;
  background: #c9ccce;
}
.q {
  display: flex;
  align-items: center;
  gap: 7px;
  color: #999;
}
.q.on {
  color: #333;
}
.title {
  margin-left: 211px;
  color: #b5b8ba;
  font: bold 14px/18px "Liberation Sans", "Noto Sans CJK SC", sans-serif;
}
.winbtns {
  display: flex;
  justify-content: flex-end;
  gap: 15px;
}

.tabs {
  display: flex;
  align-items: flex-end;
  height: 27px;
  padding: 0 8px 0 3px;
}
.tab {
  height: 19px;
  padding: 0 11px;
  border-top: 1px solid #c8cbcd;
  border-right: 1px solid #dcdfe1;
  background: #eef0f2;
  color: #6c7073;
  font: bold 15px/17px "Liberation Mono", "Noto Sans CJK SC", monospace;
}
.tab.last {
  border-right-color: #c8cbcd;
  font-size: 14px;
}
.tab.file {
  display: flex;
  align-items: center;
  gap: 3px;
  margin-right: 8px;
  padding: 0 7px 0 8px;
  border-left: 1px solid #c8cbcd;
  border-right-color: #c8cbcd;
  font-size: 14px;
}
.tab.active {
  z-index: 1;
  height: 24px;
  margin-bottom: -1px;
  padding-top: 3px;
  border: 1px solid #c8cbcd;
  border-bottom: 0;
  border-radius: 2px 2px 0 0;
  background: #fcfcfc;
  color: #333;
}
.helpers {
  display: flex;
  align-items: center;
  gap: 8px;
  height: 24px;
  margin: 0 0 5px auto;
}

.ribbon {
  display: grid;
  grid-template-columns: 129px 107px 151px 123px 151px 215px 111px 72px 1fr;
  margin: 0 4px 0 3px;
  border: solid #c6cacc;
  border-width: 1px 1px 1px 0;
}
.group {
  border-left: 1px solid #cdd0d2;
}
.tools {
  display: flex;
  gap: 9px;
  height: 77px;
  padding: 0 8px;
  color: #929497;
}
.tools.center {
  justify-content: center;
}
.col {
  display: grid;
  grid-template-rows: repeat(3, 25px);
  padding-top: 1px;
}
.col button {
  display: flex;
  align-items: center;
  gap: 3px;
  white-space: nowrap;
}
.col .dd {
  margin-left: 4px;
}
.big {
  display: flex;
  flex-direction: column;
  align-items: center;
  width: 30px;
  padding-top: 6px;
  line-height: 13px;
}
.big.wide {
  width: 48px;
}
.big span {
  margin: 8px 0 4px;
  white-space: nowrap;
}
.name {
  display: flex;
  align-items: center;
  justify-content: center;
  gap: 5px;
  width: 100%;
  height: 22px;
  border-top: 1px solid #c6cacc;
  background: #eeeff1;
  color: #333;
  line-height: 13px;
  white-space: nowrap;
}
.grey {
  filter: grayscale(1);
}

/* graphics area */
.work {
  display: flex;
  flex: 1;
  padding-left: 3px;
}
.canvas {
  position: relative;
  flex: 1;
  padding-top: 8px;
  background: linear-gradient(#c5daec, #91adcb 50%, #5b7ba8);
}
.viewbar {
  display: flex;
  width: 282px;
  height: 26px;
  margin: 0 auto;
  padding: 0 4px;
  border: 1px solid #d0d4d8;
  background: #eef0f3;
}
.viewbar button {
  display: grid;
  flex: 1;
  place-items: center;
  border-right: 1px solid #ccd0d4;
  background: #fff;
}
.ab {
  font: 9px "Liberation Mono", monospace;
}
.model {
  position: absolute;
  left: 327px;
  top: 226px;
}

.alert {
  position: absolute;
  left: 629px;
  top: 280px;
  width: 406px;
  padding: 3px;
  border: 1px solid #989b9e;
  background: #c4c8cb;
}
.alert-title {
  display: flex;
  align-items: center;
  height: 20px;
  padding-right: 7px;
  border-bottom: 1px solid #c4c8cb;
  background: linear-gradient(#fafafa, #dfe2e4);
  color: #58595c;
}
.alert-title h2 {
  flex: 1;
  text-align: center;
  font-size: 13px;
  line-height: 16px;
}
.alert-body {
  display: flex;
  gap: 12px;
  height: 44px;
  padding: 3px 12px;
  background: #edeff1;
}
.alert-body svg {
  margin-top: 6px;
}
.alert-body p {
  line-height: 17px;
  white-space: nowrap;
}
.alert-actions {
  display: flex;
  justify-content: center;
  gap: 20px;
  height: 46px;
  padding-top: 10px;
  border-top: 1px solid #d5d8da;
  background: #edeff1;
}
.alert-actions button {
  width: 63px;
  height: 25px;
  border: 1px solid #b4b7ba;
  border-radius: 2px;
  background: linear-gradient(#fcfcfc, #e6e7e8);
  font-weight: 500;
}
.alert-actions .primary {
  border-color: #7cc3ee;
  background: linear-gradient(#bfe3fa, #84cffa);
}

/* navigator */
.navigator {
  display: flex;
  flex-direction: column;
  width: 411px;
  padding: 14px 4px 11px 6px;
}
.nav-tabs {
  display: flex;
}
.nav-tabs button {
  display: grid;
  place-items: center;
  width: 30px;
  height: 28px;
  border: 1px solid #cbced0;
  border-left-width: 0;
  border-bottom: 0;
  border-radius: 2px 2px 0 0;
  background: #eef0f2;
}
.nav-tabs .active {
  z-index: 1;
  height: 29px;
  margin-bottom: -1px;
  border-left-width: 1px;
  background: #fcfcfc;
}
.nav-panel {
  flex: 1;
  border: 1px solid #c6cacc;
}
.nav-panel h3 {
  height: 29px;
  padding-left: 20px;
  border-bottom: 1px solid #c6cacc;
  font-size: 13px;
  line-height: 28px;
}
.tree {
  list-style: none;
  font-family: "Noto Sans", "Noto Sans CJK SC", sans-serif;
  color: #4b4d50;
}
.tree li {
  display: flex;
  align-items: center;
  gap: 3px;
  height: 20px;
  padding-left: 24px;
}
.tree .root {
  gap: 4px;
  padding-left: 5px;
}
.tree .closed {
  padding-left: 10px;
}
.tree .closed::before {
  width: 4px;
  border: solid transparent;
  border-width: 4px 0 4px 7px;
  border-left-color: #888;
  content: "";
}
.tree .failed {
  gap: 2px;
  color: #cc1512;
  font-weight: bold;
}
.brown {
  color: #96522a;
}

/* status bar */
.status {
  display: flex;
  align-items: center;
  gap: 4px;
  height: 37px;
  padding: 0 18px 0 5px;
  border-top: 2px solid #929598;
  border-bottom: 4px solid #ccd1d4;
  background: #edeff1;
}
.s-btn {
  display: grid;
  place-items: center;
  width: 22px;
  height: 22px;
  border: 1px solid #aeb1b4;
  border-top-width: 2px;
  background: #e2e4e6;
}
.s-btn.flat {
  border: 1px solid #d0d2d4;
}
.status > .rule {
  margin: 0 0 0 5px;
}
.status > span {
  margin-left: -3px;
}
.status-right {
  display: flex;
  align-items: center;
  gap: 2px;
  margin-left: auto;
}
.status-right .far {
  margin-left: 34px;
}
.find {
  display: grid;
  place-items: center;
  width: 40px;
  height: 23px;
  border: 1px solid #b9bcbf;
  border-radius: 2px;
  background: linear-gradient(#fdfdfd, #e4e5e6);
}
.count {
  width: 92px;
}
.status select {
  width: 178px;
  height: 20px;
  padding-left: 4px;
  appearance: none;
  border: 1px solid #c6c9cb;
  border-radius: 0;
  background: url("data:image/svg+xml,%3Csvg xmlns='http://www.w3.org/2000/svg' width='15' height='18'%3E%3Cpath d='M.5 0v18' stroke='%23d0d3d5'/%3E%3Cpath d='M4 6h8L8 12z' fill='%23666'/%3E%3C/svg%3E") right center no-repeat #fcfcfc;
}

/* element dialog */
.dialog {
  position: absolute;
  top: 156px;
  right: 4px;
  display: flex;
  flex-direction: column;
  width: 282px;
  height: 786px;
  border: 3px solid #c4c8cb;
  background: #eef0f1;
}
.dialog header {
  display: flex;
  align-items: center;
  height: 21px;
  padding: 0 7px 0 0;
  border-bottom: 1px solid #c6cacc;
  background: #fbfbfb;
  color: #b3b5b7;
}
.dialog header h2 {
  flex: 1;
  text-align: center;
  font-size: 13px;
}
.dialog nav {
  display: flex;
  gap: 17px;
  height: 31px;
  padding: 0 9px;
  border-bottom: 1px solid #c6cacc;
  color: #b6b9bb;
}
.dialog nav button {
  font-size: 13px;
  font-weight: 500;
}
.bar {
  display: flex;
  align-items: center;
  gap: 6px;
  height: 19px;
  padding-left: 6px;
  background: #dfe3e4;
  font: 12px/14px "Liberation Serif", "Noto Sans CJK SC", serif;
}
.bar::before {
  border: 6px solid transparent;
  border-top-color: #4c4e50;
  border-bottom: 0;
  content: "";
}
.grid-box {
  display: flex;
  flex-direction: column;
  height: 177px;
  margin: 0 1px;
  padding: 1px 1px;
  border: 1px solid #a9adb0;
  background: #fff;
}
.grid-box + .bar {
  height: 20px;
}
.dialog table {
  flex: 1;
  display: block;
  border-collapse: collapse;
  font: 12px/16px "Liberation Serif", "Noto Sans CJK SC", serif;
}
.dialog th {
  width: 96px;
  height: 17px;
  padding: 0;
  border-bottom: 1px solid #c6cacc;
  background: linear-gradient(#fcfcfc, #e6e8ea);
  font-size: 13px;
  line-height: 15px;
}
.dialog th:first-child {
  width: 176px;
  border-right: 1px solid #dcdfe1;
}
.dialog td {
  height: 16px;
  padding: 0 0 0 2px;
  line-height: 15px;
  white-space: nowrap;
}
.dialog td:first-child {
  padding-left: 23px;
  border-right: 1px solid #e8eaec;
}
.dialog .top td:first-child {
  padding-left: 3px;
}
.dialog td svg {
  display: inline-block;
  margin-right: 2px;
  vertical-align: -2px;
}
mark {
  display: inline-block;
  background: #abdfff;
  color: inherit;
  line-height: 14px;
}
.navy {
  color: #003050;
}
.scrolls {
  display: grid;
  grid-template-columns: 176px 1fr;
}
.scroll {
  display: flex;
  height: 17px;
  border: 1px solid #d0d3d5;
  background: #f2f3f4;
}
.scroll button {
  width: 17px;
  background: #eef0f2;
  color: #333;
  font: 8px/12px "DejaVu Sans", sans-serif;
}
.scroll.off button {
  color: #b9bcbf;
}
.scroll span {
  flex: 1;
  border: solid #d0d3d5;
  border-width: 0 1px;
  background: #fff;
}
.scroll i {
  display: block;
  width: 55px;
  height: 15px;
  border: 1px solid #bbbec1;
  background: repeating-linear-gradient(90deg, #aaa 0 1px, #eee 1px 3px) center / 12px 7px no-repeat #f1f2f3;
}
.fields {
  display: flex;
  flex: 1;
  flex-direction: column;
  gap: 4px;
  margin: 4px 3px 2px 4px;
  background: #fcfcfc;
}
fieldset {
  min-width: 0;
  margin: 0;
  padding: 5px 7px 10px;
  border: 1px solid #c3c7ca;
}
legend {
  margin-left: 6px;
  padding: 0 4px;
  color: #333;
  font: bold 13px/14px "Liberation Serif", "Noto Sans CJK SC", serif;
}
.fields input[type="text"] {
  display: block;
  width: 100%;
  height: 20px;
  padding: 0 3px;
  border: 1px solid #a9adb0;
  background: #fff;
  font: 12px/16px "Liberation Serif", "Noto Sans CJK SC", serif;
}
.pick {
  display: flex;
  gap: 1px;
}
.pick button {
  display: grid;
  flex: none;
  place-items: center;
  width: 34px;
  height: 22px;
  border: 1px solid #b9bcbf;
  border-radius: 2px;
  background: linear-gradient(#fcfcfc, #e6e7e8);
  color: #000;
}
.radios {
  display: grid;
  grid-template-columns: 127px 1fr;
  padding-left: 3px;
}
.radios label {
  display: flex;
  align-items: center;
  gap: 35px;
  height: 18px;
}
.radios span {
  padding-bottom: 5px;
}
.radios input,
.check input {
  flex: none;
  width: 13px;
  height: 13px;
  margin: 0;
  appearance: none;
  border: 1px solid #8e9194;
  background: #fff;
}
.radios input {
  border-radius: 50%;
}
.radios input:checked {
  background: radial-gradient(#333 3px, #fff 4px);
}
.small {
  align-self: center;
}
.check {
  display: flex;
  align-items: center;
  gap: 6px;
  height: 18px;
  padding-left: 3px;
}
.dialog-actions {
  display: flex;
  gap: 2px;
  height: 40px;
  padding: 6px 15px;
  border-top: 1px solid #c6cacc;
}
.dialog-actions button {
  display: grid;
  place-items: center;
  width: 66px;
  height: 28px;
  border: 1px solid #b4b7ba;
  border-radius: 2px;
  background: linear-gradient(#fcfcfc, #e6e7e8);
}
.dialog-actions .ok {
  border-color: #4ba3d8;
  background: linear-gradient(#92cff4, #63b4e6);
}
.dialog-actions .preview {
  margin-left: 6px;
  border-color: #d3d6d8;
  background: #eaecec;
}

.watermark {
  position: absolute;
  right: 5px;
  bottom: 5px;
  display: flex;
  gap: 7px;
  width: 206px;
  height: 62px;
  padding: 3px 0 0 2px;
  background: rgba(255, 255, 255, 0.35);
  pointer-events: none;
}
.watermark strong {
  display: block;
  color: rgba(120, 205, 155, 0.8);
  font: 900 29px/34px "Noto Sans CJK SC", sans-serif;
  white-space: nowrap;
}
.watermark span {
  display: block;
  margin-left: -12px;
  color: rgba(140, 200, 190, 0.9);
  font: 15px/24px "Noto Sans", sans-serif;
}
```
